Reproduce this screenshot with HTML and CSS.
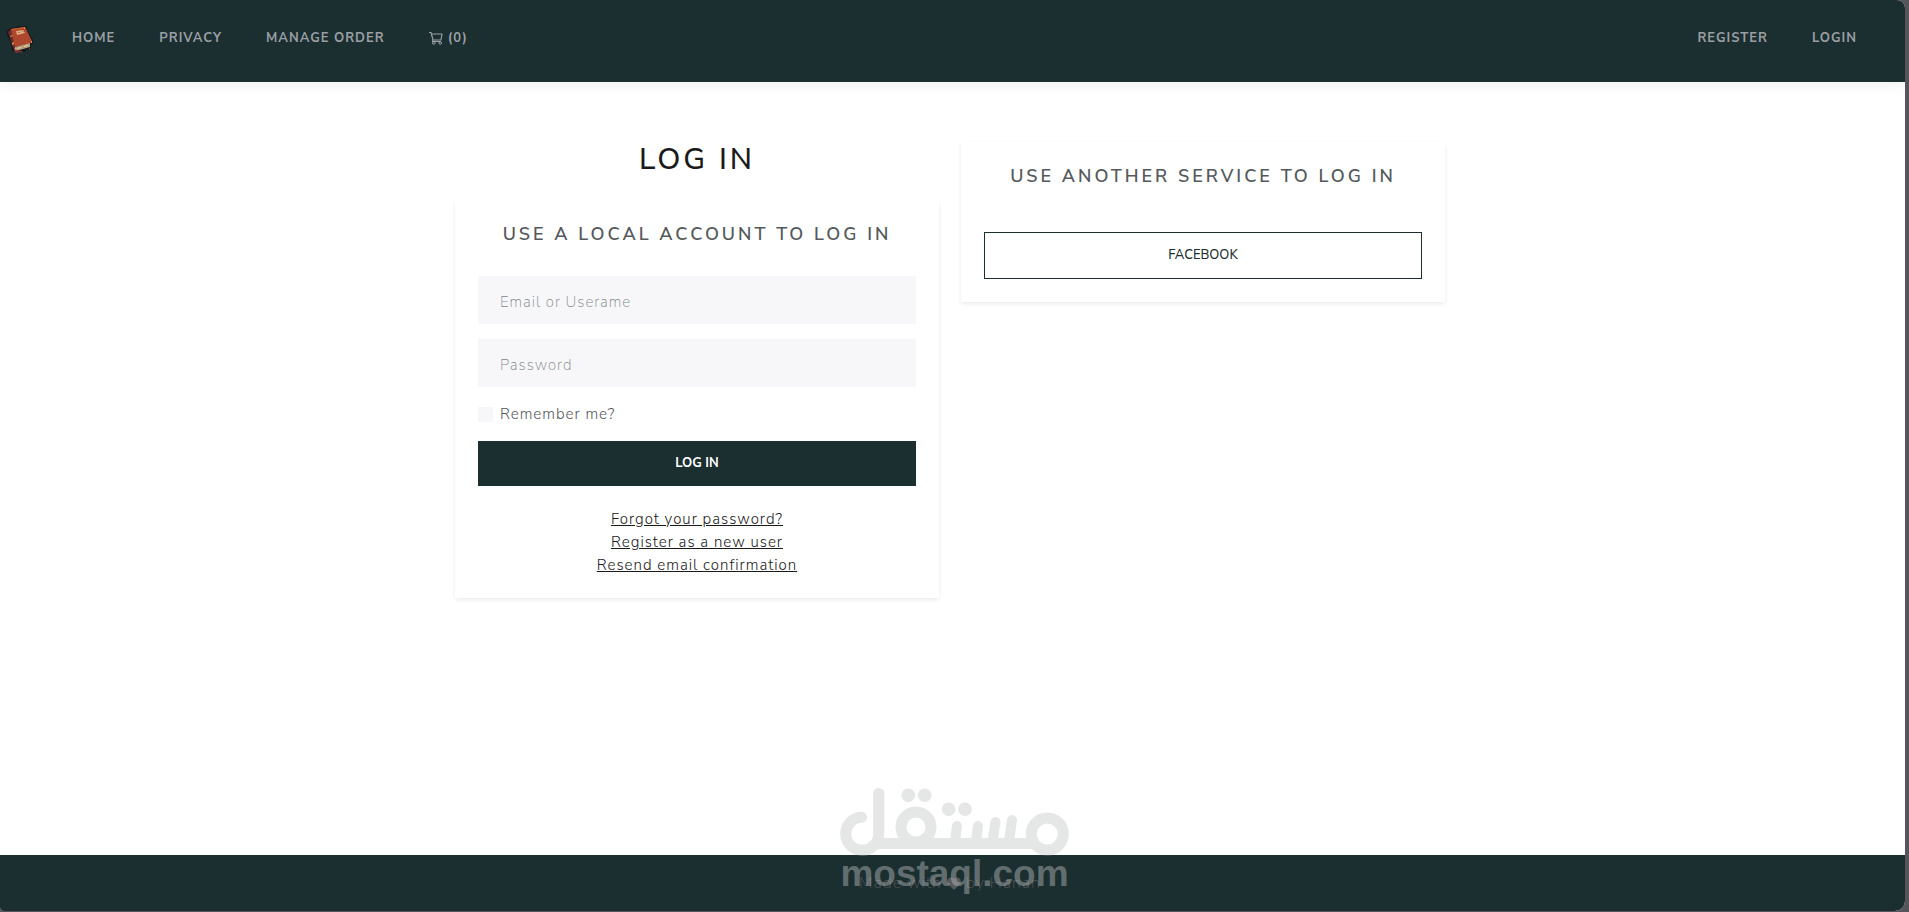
FILE: index.html
```html
<!DOCTYPE html>
<html lang="en">
<head>
<meta charset="utf-8">
<title>Log in</title>
<link rel="stylesheet" href="styles.css">
</head>
<body>
<div class="page">
  <header class="navbar">
    <a class="brand" href="#" aria-label="Book store">
      <svg class="brand-icon" viewBox="0 0 28 28" aria-hidden="true">
        <path d="M1 5 4 2 17 0h3l1 4 6 10v3l-2 2v4l-5 1-1 2h-2l-1-1-7 1-3-2L5 17 1 8z" fill="#16191c"/>
        <path d="M2 6 5 3l5 11-1 7-2 1-2-7z" fill="#6f2a2b"/>
        <path d="M5 3 19 1l7 14-1 2-16 4-1-4z" fill="#ad472d"/>
        <path d="M5 3 19 1v1L6 4z" fill="#c9603a"/>
        <path d="M10 5l7-1 2 3-8 2z" fill="#dfab80"/>
        <path d="M12 6h2v1h-2zM16 5h1v1h-1z" fill="#b87650"/>
        <path d="M9 21l15-4v4L10 25l-2-2z" fill="#b99c79"/>
        <path d="M11 22l4-1v1l-4 1zM18 20l4-1v1l-4 1z" fill="#e6cda5"/>
        <path d="M4 10l3-1v1l-3 1zM6 17l2-1v2l-2 1zM18 1h1v2h-1zM25 15h1v2h-1z" fill="#e08a45"/>
        <path d="M8 22l1 2 7 1v2l-2-1-4 1-2-2zM23 22h1v2h-1z" fill="#7d3030"/>
      </svg>
    </a>
    <nav class="nav nav-main" aria-label="Main">
      <a href="#">Home</a>
      <a href="#">Privacy</a>
      <a href="#">Manage Order</a>
      <a href="#" class="cart" aria-label="Cart (0)">
        <svg class="cart-icon" viewBox="0 0 14 14" aria-hidden="true">
          <path d="M0 1.500h2l2 7.500h8l1-6H2.500M4 9l-.5 1.500H12" fill="none" stroke="currentColor" stroke-width="1.200" stroke-linejoin="round"/>
          <circle cx="4.800" cy="12" r="1.300" fill="none" stroke="currentColor"/>
          <circle cx="11.200" cy="12" r="1.300" fill="none" stroke="currentColor"/>
        </svg>
        <span>(0)</span>
      </a>
    </nav>
    <nav class="nav nav-user" aria-label="Account">
      <a href="#">Register</a>
      <a href="#">Login</a>
    </nav>
  </header>

  <main class="content">
    <section class="column">
      <h1 class="title">Log in</h1>
      <form class="card">
        <h2 class="card-title">Use a local account to log in</h2>
        <input class="field" type="text" placeholder="Email or Userame" aria-label="Email or Userame">
        <input class="field" type="password" placeholder="Password" aria-label="Password">
        <label class="remember"><input class="check" type="checkbox"><span>Remember me?</span></label>
        <button class="button button-primary" type="submit">Log in</button>
        <div class="links">
          <a href="#">Forgot your password?</a>
          <a href="#">Register as a new user</a>
          <a href="#">Resend email confirmation</a>
        </div>
      </form>
    </section>
    <section class="column">
      <div class="card card-service">
        <h2 class="card-title">Use another service to log in</h2>
        <button class="button button-outline" type="button">Facebook</button>
      </div>
    </section>
  </main>

  <footer class="footer">
    <p class="credit">Made with <svg class="heart" viewBox="0 0 14 13" aria-hidden="true"><path d="M7 13 1 7C-2 3 3-2 7 2c4-4 9 1 6 5z" fill="currentColor"/></svg> by Hanan</p>
    <div class="watermark">
      <svg class="watermark-logo" viewBox="20 18 229 68" role="img" aria-label="مستقل">
        <g fill="none" stroke="currentColor" stroke-width="11" stroke-linecap="round">
          <path d="M41.500 47.300A16.500 16.500 0 1 0 58.700 64V23.500"/>
          <path stroke-linecap="butt" d="M52 73.500H217"/>
          <circle cx="96" cy="57" r="15"/>
          <circle cx="227.300" cy="64" r="16"/>
          <path stroke-width="10" d="M137 56l-2 15M158 56l-2 15M175.500 52l-3 19M192 50l-3 21"/>
        </g>
        <g fill="currentColor">
          <circle cx="88.300" cy="25.300" r="6.800"/>
          <circle cx="104.700" cy="25.300" r="6.800"/>
          <circle cx="128.700" cy="39.300" r="6.800"/>
          <circle cx="145" cy="39.300" r="6.800"/>
        </g>
      </svg>
      <span class="watermark-text">mostaql.com</span>
    </div>
  </footer>
</div>
</body>
</html>
```
FILE: styles.css
```css
* { box-sizing: border-box; }

body {
  margin: 0;
  background: #55555b;
  color: #55595c;
  font-family: "Nunito Sans", Nunito, Lato, "Open Sans", sans-serif;
  font-size: 15px;
  font-weight: 300;
  line-height: 23px;
  letter-spacing: 1px;
}

.page {
  display: flex;
  flex-direction: column;
  min-height: calc(100vh - 1px);
  margin-right: 4px;
  background: #fff;
  border-radius: 0 8px 10px 4px;
  overflow: hidden;
}

.navbar {
  display: flex;
  align-items: center;
  height: 82px;
  padding: 0 48px 6px 6px;
  background: #1b2e30;
  box-shadow: 0 4px 12px rgba(0, 0, 0, 0.05);
}

.brand { display: flex; margin-right: 38px; padding-top: 4px; }
.brand-icon { width: 28px; height: 28px; }

.nav { display: flex; align-items: center; gap: 44px; }
.nav-user { margin-left: auto; }
.nav a {
  color: #9a9fa4;
  font-size: 13px;
  font-weight: 700;
  line-height: 20px;
  text-decoration: none;
  text-transform: uppercase;
}
.nav .cart { display: flex; align-items: center; gap: 5px; }
.cart-icon { width: 14px; height: 14px; }

.content {
  display: flex;
  flex: 1;
  justify-content: center;
  align-items: flex-start;
  gap: 22px;
  padding: 60px 27px 60px 22px;
}
.column { flex: 0 1 484px; }

.title {
  margin: 0 0 23px;
  color: #1a1a1a;
  font-size: 30px;
  font-weight: 500;
  line-height: 36px;
  letter-spacing: 3px;
  text-align: center;
  text-transform: uppercase;
}

.card {
  display: flex;
  flex-direction: column;
  padding: 21px 23px;
  border-radius: 2px;
  background: #fff;
  box-shadow: 0 2px 4px rgba(0, 0, 0, 0.08);
}
.card-service { padding: 22px 23px 23px; }
.card-service .card-title { margin-bottom: 44px; }
.card-title {
  margin: 0 0 30px;
  color: #55595c;
  font-size: 18px;
  font-weight: 600;
  line-height: 24px;
  letter-spacing: 3px;
  text-align: center;
  text-transform: uppercase;
}

.field {
  width: 100%;
  height: 48px;
  margin-bottom: 15px;
  padding: 4px 22px 0;
  border: 0;
  background: #f7f7f9;
  color: inherit;
  font: inherit;
  font-weight: 200;
  letter-spacing: inherit;
}
.field::placeholder { color: #7f888a; opacity: 1; }

.remember { display: flex; align-items: center; gap: 7px; padding-top: 1px; }
.check {
  width: 15px;
  height: 15px;
  margin: 0;
  appearance: none;
  background: #f7f7f9;
}

.button {
  height: 45px;
  padding: 0 0 2px;
  border: 0;
  font-family: inherit;
  font-size: 13px;
  font-weight: 500;
  text-align: center;
  text-transform: uppercase;
}
.button-primary { margin: 15px 0 22px; background: #1b2e30; color: #fff; font-weight: 700; }
.button-outline { height: 47px; border: 1px solid #1b2e30; background: #fff; color: #1b2e30; }

.links { display: flex; flex-direction: column; align-items: center; }
.links a { color: #1a1a1a; }

.footer {
  position: relative;
  display: flex;
  justify-content: center;
  height: 56px;
  padding: 17px 5px 0 0;
  background: #1b2e30;
}
.credit { margin: 0; color: #55595c; font-size: 16px; font-weight: 200; }
.heart { width: 14px; height: 13px; vertical-align: -2px; }

.watermark {
  position: absolute;
  inset: auto 0 14px 4px;
  display: flex;
  flex-direction: column;
  align-items: center;
  color: #c3c4c4;
  opacity: 0.42;
  pointer-events: none;
}
.watermark-logo { width: 229px; height: 68px; }
.watermark-text {
  padding-bottom: 5px;
  font-family: "Liberation Sans", sans-serif;
  font-size: 37px;
  font-weight: 700;
  line-height: 36px;
  letter-spacing: 0;
}
```
